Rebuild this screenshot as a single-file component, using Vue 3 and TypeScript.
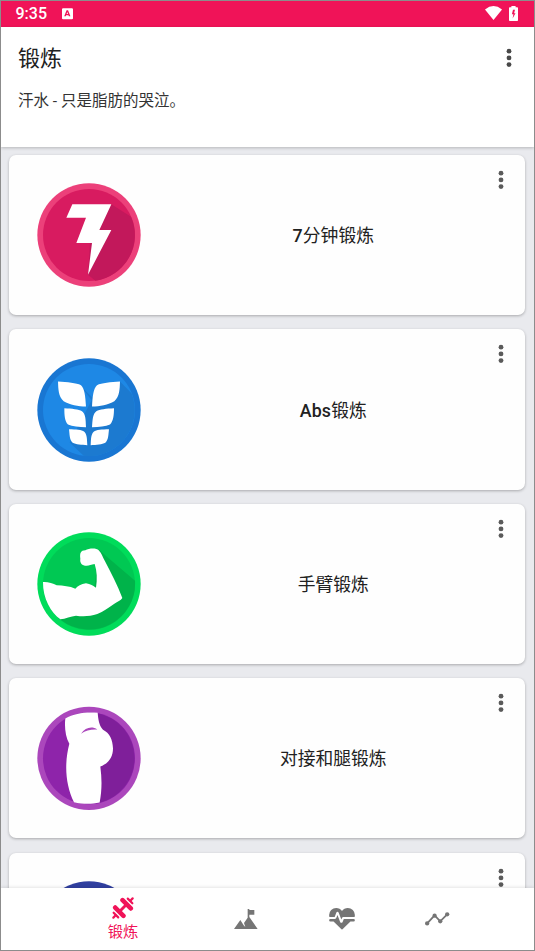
<script setup lang="ts">
interface Workout {
  kind: string
  prefix: string
  title: string
  viewBox: string
}

const workouts: Workout[] = [
  { kind: 'seven', prefix: '7', title: '分钟锻炼', viewBox: '21 24 312 312' },
  { kind: 'abs', prefix: 'Abs', title: '锻炼', viewBox: '21 23.5 312 312' },
  { kind: 'arm', prefix: '', title: '手臂锻炼', viewBox: '21 21 312 312' },
  { kind: 'legs', prefix: '', title: '对接和腿锻炼', viewBox: '21 18.5 312 312' },
  { kind: 'more', prefix: '', title: '', viewBox: '21 21 312 312' },
]
</script>

<template>
  <div class="screen">
    <div class="status">
      <span class="time">9:35</span>
      <svg class="badge" viewBox="0 0 12 12"><path fill-rule="evenodd" d="M1.2 0H10.8Q12 0 12 1.2V10.8Q12 12 10.8 12H1.2Q0 12 0 10.8V1.2Q0 0 1.2 0ZM5 2.2L2.4 8.8H4.1L4.5 7.7H7.1L7.5 8.8H9.2L6.6 2.2ZM5.8 4.2L6.6 6.3H5Z" /></svg>
      <span class="spacer"></span>
      <svg class="wifi" viewBox="0 0 17 14"><path d="M0 3.4Q8.5-3.2 17 3.4L8.5 14Z" /></svg>
      <svg class="battery" viewBox="0 0 9 15"><path fill-rule="evenodd" d="M2.4 1.3V0H6.6V1.3H8.2Q9 1.3 9 2.1V14.2Q9 15 8.2 15H.8Q0 15 0 14.2V2.1Q0 1.3.8 1.3ZM4 3.8L2.9 8.3H4.4L3.6 12.4L6.5 7.2H5.1L6 3.8Z" /></svg>
    </div>

    <header class="header">
      <div class="heading">
        <h1>锻炼</h1>
        <svg class="dots" viewBox="0 0 6 20"><circle cx="3" cy="3.2" r="2.4" /><circle cx="3" cy="9.9" r="2.4" /><circle cx="3" cy="16.6" r="2.4" /></svg>
      </div>
      <p>汗水 - 只是脂肪的哭泣。</p>
    </header>

    <main class="list">
      <article v-for="w in workouts" :key="w.kind" class="card">
        <svg class="art" :viewBox="w.viewBox">
          <g v-if="w.kind === 'seven'">
            <circle cx="177" cy="180" r="155" fill="#ec407a" />
            <circle cx="177" cy="180" r="138" fill="#d81b60" />
            <path d="M244 88L303 125A138 138 0 0 1 196 317L174 299L180 204Z" fill="#c2185b" />
            <path d="M127 88H244L208 165H244L174 299L186 204H139L168 128H109Z" fill="#fff" />
          </g>
          <g v-else-if="w.kind === 'abs'">
            <circle cx="177" cy="179.5" r="155" fill="#1976d2" />
            <circle cx="177" cy="179.5" r="138" fill="#1e88e5" />
            <path d="M270 94L305 130A138 138 0 0 1 161 317L119 277L185 150L150 105L190 145Z" fill="#1c7ad0" />
            <path d="M84 94C112 96 139 98 153 105C164 116 166 136 168 169C145 168 119 164 101 153C85 139 85 117 84 94ZM270 94C242 96 215 98 201 105C190 116 188 136 186 169C209 168 235 164 253 153C269 139 269 117 270 94ZM103 174C126 175 146 177 156 183C167 191 167 207 168 231C147 231 127 229 114 223C104 213 103 195 103 174ZM252 174C229 175 209 177 199 183C188 191 188 207 186 231C207 231 227 229 240 223C250 213 252 195 252 174ZM117 237C138 237 156 239 162 244C171 252 171 265 172 285C155 285 137 283 128 278C118 268 119 252 117 237ZM237 237C216 237 198 239 192 244C183 252 183 265 182 285C199 285 217 283 226 278C236 268 235 252 237 237Z" fill="#fff" />
          </g>
          <g v-else-if="w.kind === 'arm'">
            <circle cx="177" cy="177" r="155" fill="#00dc5a" />
            <circle cx="177" cy="177" r="138" fill="#00c853" />
            <path d="M207 75L315 167A138 138 0 0 1 92 284L194 180Z" fill="#00b34a" />
            <path d="M39 171C52 170 69 174 80 181C100 182 119 184 136 191C143 184 153 177 168 175C181 177 190 183 198 188C202 163 201 138 194 117C183 118 178 122 170 122C156 122 149 114 151 101C149 85 152 76 166 76C178 69 200 69 206 76C215 84 217 95 225 109C243 143 262 180 277 219C272 227 263 230 253 236C235 248 220 260 202 267C180 274 160 275 138 272C123 273 106 282 91 283C63 263 38 220 39 171Z" fill="#fff" />
          </g>
          <g v-else-if="w.kind === 'legs'">
            <circle cx="177" cy="175.5" r="155" fill="#ab47bc" />
            <circle cx="177" cy="175.5" r="138" fill="#8e24aa" />
            <path d="M203 40A138 138 0 0 1 209 309L170 180Z" fill="#7f1f9a" />
            <path d="M106 56C133 40 168 36 203 39C205 60 207 77 219 90C239 100 248 119 249 146C249 174 233 192 211 200C216 237 216 272 209 308C181 314 155 312 132 307C105 253 103 188 118 132C106 111 103 80 106 56Z" fill="#fff" />
            <path d="M153 102C166 83 185 78 202 89C183 88 168 91 153 102Z" fill="#ab47bc" />
          </g>
          <circle v-else cx="177" cy="177" r="155" fill="#303f9f" />
        </svg>
        <h2><b v-if="w.prefix">{{ w.prefix }}</b>{{ w.title }}</h2>
        <svg class="dots card-dots" viewBox="0 0 6 20"><circle cx="3" cy="3.2" r="2.4" /><circle cx="3" cy="9.9" r="2.4" /><circle cx="3" cy="16.6" r="2.4" /></svg>
      </article>
    </main>

    <nav class="nav">
      <a class="item active">
        <svg class="dumbbell" viewBox="0 0 24 24">
          <path d="M8 16L16 8" stroke-width="3.2" />
          <path d="M3.5 11.5L12.5 20.5M11.5 3.5L20.5 12.5" stroke-width="5" stroke-linecap="round" />
          <path d="M1.8 17.2L6.8 22.2M17.2 1.8L22.2 6.8" stroke-width="2.4" stroke-linecap="round" />
          <path d="M1.5 22.5L4 20M20 4L22.5 1.5" stroke-width="2.4" stroke-linecap="round" />
        </svg>
        <span>锻炼</span>
      </a>
      <a class="item">
        <svg class="mountain" viewBox="0 0 72 60"><path d="M0 60L19 33L29 49L34 54L30 42L41 26V0H46V3H61V17H46V24L71 60Z" /></svg>
      </a>
      <a class="item">
        <svg class="heart" viewBox="2 4 20 16.7"><path d="M7.5 4A5.5 5.5 0 0 0 2 9.5C2 10 2.09 10.5 2.22 11H6.3L7.57 7.63C7.87 6.83 9.05 6.75 9.43 7.63L11.5 13L12.09 11.58C12.22 11.25 12.57 11 13 11H21.78C21.91 10.5 22 10 22 9.5A5.5 5.5 0 0 0 16.5 4C14.64 4 13 4.93 12 6.34C11 4.93 9.36 4 7.5 4ZM3 12.5A1 1 0 0 0 2 13.5A1 1 0 0 0 3 14.5H5.44L11 20C12 20.9 12 20.9 13 20L18.56 14.5H21A1 1 0 0 0 22 13.5A1 1 0 0 0 21 12.5H13.4L12.47 14.8C12.07 15.81 10.92 15.67 10.55 14.83L8.5 9.5L7.54 11.83C7.39 12.21 7.05 12.5 6.6 12.5Z" /></svg>
      </a>
      <a class="item">
        <svg class="trend" viewBox="0 0 74 42"><path d="M6 35L29 10L46 28L67 7" /><circle cx="6.5" cy="34.5" r="6.5" /><circle cx="29" cy="11" r="6.5" /><circle cx="46" cy="28" r="6.5" /><circle cx="67" cy="7" r="6.5" /></svg>
      </a>
    </nav>
  </div>
</template>

<style>
body {
  margin: 0;
}
</style>

<style scoped>
.screen {
  box-sizing: border-box;
  width: 535px;
  height: 951px;
  border: 1px solid #8c8c8c;
  display: flex;
  flex-direction: column;
  overflow: hidden;
  background: #e9eaee;
  color: #212121;
  font-family: Roboto, "Noto Sans CJK SC", sans-serif;
}
svg {
  display: block;
  flex: none;
}
.status {
  flex: none;
  height: 26px;
  box-sizing: border-box;
  padding: 0 16px 0 14.5px;
  display: flex;
  align-items: center;
  background: #f01358;
  color: #fff;
  fill: #fff;
}
.time {
  font-size: 16px;
  font-weight: 500;
  line-height: 26px;
}
.badge {
  width: 11px;
  height: 11.5px;
  margin-left: 14.5px;
}
.spacer {
  flex: 1;
}
.wifi {
  width: 17px;
  height: 14px;
  margin-right: 7.5px;
  margin-bottom: 1.5px;
}
.battery {
  width: 9px;
  height: 15px;
  margin-bottom: 2px;
}
.header {
  flex: none;
  height: 120px;
  box-sizing: border-box;
  padding: 15px 22px 0 17px;
  background: #fff;
  box-shadow: 0 1px 3px rgba(0, 0, 0, 0.22);
}
.heading {
  display: flex;
  justify-content: space-between;
  align-items: center;
  height: 32px;
}
h1 {
  margin: 2px 0 0;
  font-size: 22px;
  line-height: 32px;
  font-weight: 400;
}
p {
  margin: 16px 0 0;
  font-size: 15.5px;
  line-height: 23px;
  color: #333;
}
.dots {
  width: 6px;
  height: 20px;
  fill: #484848;
}
.list {
  flex: 1;
  min-height: 0;
  overflow: hidden;
  padding: 8px 9px 0 8px;
  display: flex;
  flex-direction: column;
  gap: 14.1px;
}
.card {
  flex: none;
  height: 160.3px;
  box-sizing: border-box;
  padding: 0 21.5px 0 28px;
  display: flex;
  align-items: center;
  background: #fefefe;
  border-radius: 7px;
  box-shadow: 0 1px 3px rgba(0, 0, 0, 0.28);
}
.art {
  width: 104px;
  height: 104px;
}
h2 {
  flex: 1;
  margin: 2px 0 0 28px;
  text-align: center;
  font-size: 17.8px;
  line-height: 26px;
  font-weight: 400;
}
h2 b {
  font-weight: 500;
  letter-spacing: 0.2px;
}
.card-dots {
  align-self: flex-start;
  margin-top: 15px;
  fill: #5a5a5a;
}
.nav {
  flex: none;
  height: 62px;
  box-sizing: border-box;
  padding: 0 49px 0 74px;
  display: grid;
  grid-template-columns: 96px 150px 42px 1fr;
  background: #fff;
  box-shadow: 0 -1px 3px rgba(0, 0, 0, 0.1);
  position: relative;
  fill: #757575;
}
.item {
  display: flex;
  justify-content: center;
  align-items: center;
}
.item:last-child {
  padding-left: 27px;
}
.active {
  flex-direction: column;
  justify-content: flex-start;
  padding-top: 9px;
  color: #f01358;
  font-size: 15.3px;
  line-height: 22px;
}
.active span {
  margin-top: 2px;
}
.dumbbell {
  width: 22px;
  height: 22px;
  fill: none;
  stroke: #f01358;
}
.mountain {
  width: 24px;
  height: 20px;
}
.heart {
  width: 26px;
  height: 21.5px;
}
.trend {
  width: 24.5px;
  height: 14px;
}
.trend path {
  fill: none;
  stroke: #757575;
  stroke-width: 5.5;
}
</style>
